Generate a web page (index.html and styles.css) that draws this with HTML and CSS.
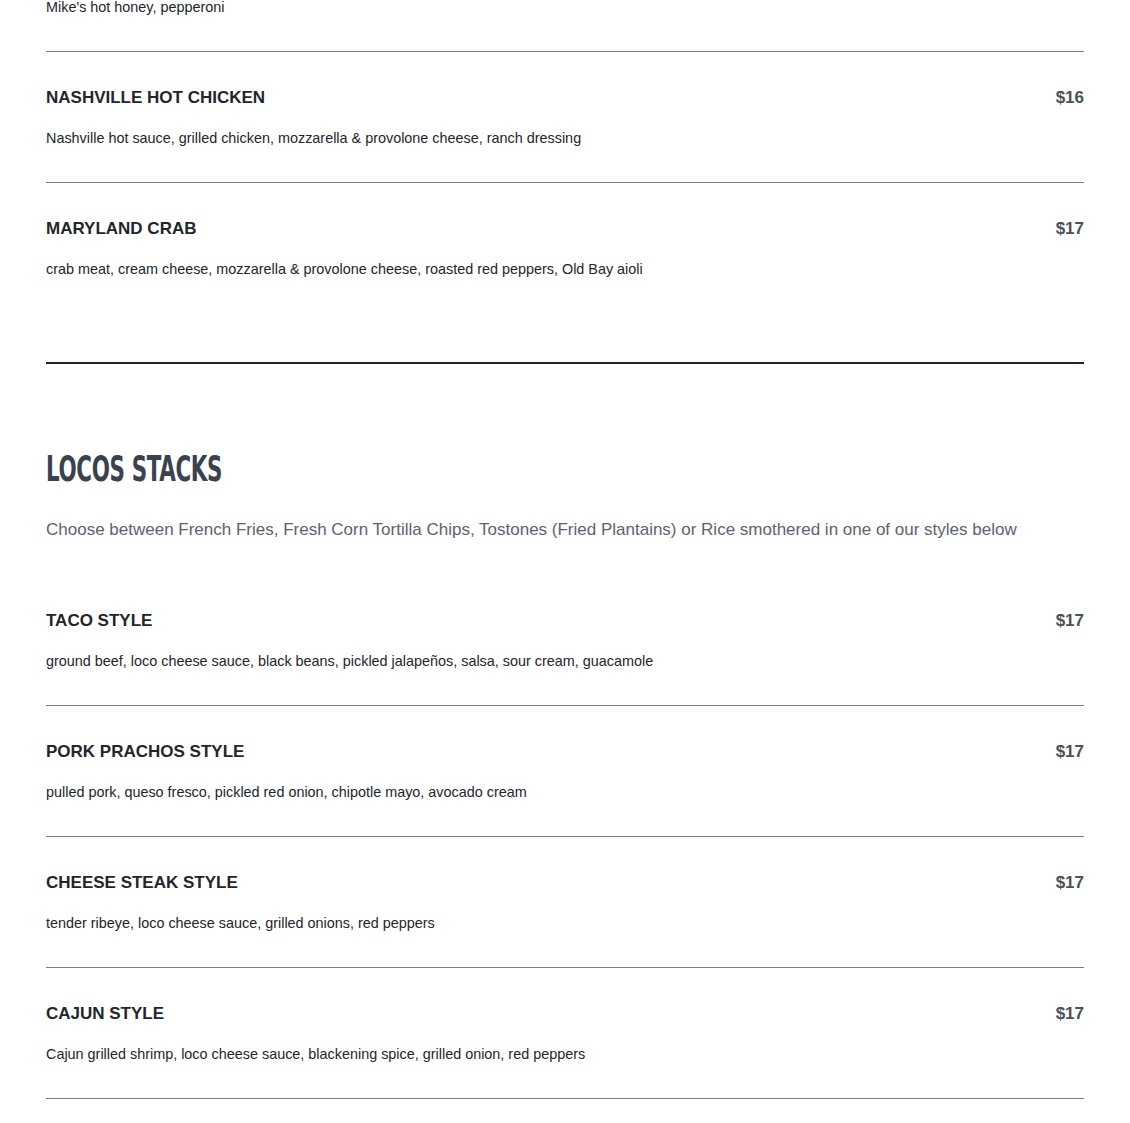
FILE: index.html
```html
<!DOCTYPE html>
<html lang="en">
<head>
<meta charset="utf-8">
<title>Menu</title>
<link rel="stylesheet" href="styles.css">
</head>
<body>
<main class="menu">
  <section class="section">
    <ul class="items">
      <li class="item item-partial">
        <p class="item-desc">Mike's hot honey, pepperoni</p>
      </li>
      <li class="item">
        <div class="item-head"><h3 class="item-name">NASHVILLE HOT CHICKEN</h3><span class="item-price">$16</span></div>
        <p class="item-desc">Nashville hot sauce, grilled chicken, mozzarella &amp; provolone cheese, ranch dressing</p>
      </li>
      <li class="item">
        <div class="item-head"><h3 class="item-name">MARYLAND CRAB</h3><span class="item-price">$17</span></div>
        <p class="item-desc">crab meat, cream cheese, mozzarella &amp; provolone cheese, roasted red peppers, Old Bay aioli</p>
      </li>
    </ul>
  </section>
  <section class="section section-open">
    <h2 class="section-title"><span class="section-title-text">LOCOS STACKS</span></h2>
    <p class="section-sub">Choose between French Fries, Fresh Corn Tortilla Chips, Tostones (Fried Plantains) or Rice smothered in one of our styles below</p>
    <ul class="items items-bordered">
      <li class="item">
        <div class="item-head"><h3 class="item-name">TACO STYLE</h3><span class="item-price">$17</span></div>
        <p class="item-desc">ground beef, loco cheese sauce, black beans, pickled jalapeños, salsa, sour cream, guacamole</p>
      </li>
      <li class="item">
        <div class="item-head"><h3 class="item-name">PORK PRACHOS STYLE</h3><span class="item-price">$17</span></div>
        <p class="item-desc">pulled pork, queso fresco, pickled red onion, chipotle mayo, avocado cream</p>
      </li>
      <li class="item">
        <div class="item-head"><h3 class="item-name">CHEESE STEAK STYLE</h3><span class="item-price">$17</span></div>
        <p class="item-desc">tender ribeye, loco cheese sauce, grilled onions, red peppers</p>
      </li>
      <li class="item">
        <div class="item-head"><h3 class="item-name">CAJUN STYLE</h3><span class="item-price">$17</span></div>
        <p class="item-desc">Cajun grilled shrimp, loco cheese sauce, blackening spice, grilled onion, red peppers</p>
      </li>
    </ul>
  </section>
</main>
</body>
</html>
```
FILE: styles.css
```css
* { box-sizing: border-box; }
html, body { margin: 0; padding: 0; background: #ffffff; }
body {
  font-family: "Liberation Sans", Arial, sans-serif;
  color: #1f2328;
  overflow: hidden;
}
.menu {
  padding: 0 46px;
  margin-top: -5px;
}
.section {
  border-bottom: 2px solid #1f2328;
  padding-bottom: 49px;
}
.section-open {
  border-bottom: none;
  padding-top: 83px;
}
.items {
  list-style: none;
  margin: 0;
  padding: 0;
}
.item {
  padding: 34px 0 32px;
  border-bottom: 1px solid #7d7d7d;
}
.items > .item:last-child { border-bottom: none; }
.items-bordered > .item:last-child { border-bottom: 1px solid #7d7d7d; }
.item-partial { padding-top: 0; padding-bottom: 32px; }
.item-head {
  display: flex;
  justify-content: space-between;
  align-items: center;
  height: 24px;
  margin-bottom: 16px;
}
.item-name {
  margin: 0;
  font-size: 17px;
  line-height: 24px;
  font-weight: 700;
  color: #22262b;
}
.item-price {
  font-size: 17px;
  line-height: 24px;
  font-weight: 700;
  color: #4b5159;
}
.item-desc {
  margin: 0;
  font-size: 14.4px;
  line-height: 24px;
  color: #22262b;
}
.section-title {
  margin: 0 0 27px;
  height: 44px;
  line-height: 44px;
  font-weight: 700;
}
.section-title-text {
  display: inline-block;
  font-family: "DejaVu Sans", sans-serif;
  font-stretch: condensed;
  font-size: 35px;
  color: #3a4250;
  letter-spacing: -0.5px;
  transform: scaleX(0.68);
  transform-origin: left center;
}
.section-sub {
  margin: 0 0 33px;
  font-size: 17px;
  line-height: 24px;
  color: #5b6370;
}
```
